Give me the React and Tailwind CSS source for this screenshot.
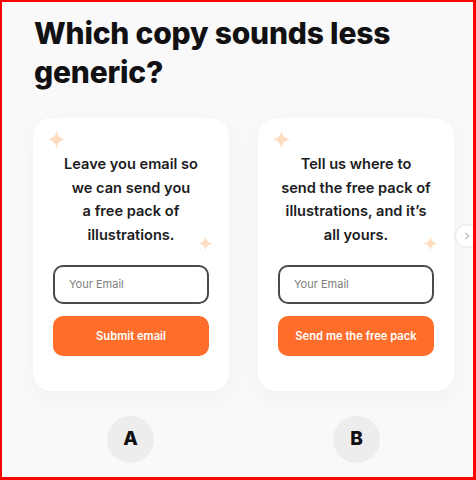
import React from 'react';

const Sparkle = ({ size = 18, className = '' }) => (
  <svg width={size} height={size} viewBox="0 0 24 24" className={className}>
    <path
      d="M12 0 C12.8 7.5 16.5 11.2 24 12 C16.5 12.8 12.8 16.5 12 24 C11.2 16.5 7.5 12.8 0 12 C7.5 11.2 11.2 7.5 12 0 Z"
      fill="#fddcc0"
    />
  </svg>
);

const CopyCard = ({ lines, button }) => (
  <div className="relative w-[196px] h-[273px] bg-white rounded-[18px] shadow-[0_6px_24px_rgba(0,0,0,0.04)] px-5 pt-[35px] flex flex-col">
    <Sparkle size={19} className="absolute left-[14px] top-[12px]" />
    <Sparkle size={15} className="absolute right-[16px] top-[118px]" />
    <p className="text-center text-[14.6px] leading-[23.5px] font-semibold text-[#1c1c1e]">
      {lines.map((l, i) => (
        <React.Fragment key={i}>
          {l}
          {i < lines.length - 1 && <br />}
        </React.Fragment>
      ))}
    </p>
    <div className="mt-[18px] h-[39px] rounded-[10px] border-2 border-[#4a4a4d] flex items-center px-[14px]">
      <span className="text-[11px] text-[#808080]">Your Email</span>
    </div>
    <button className="mt-[12px] h-[40px] rounded-[10px] bg-[#ff6d2b] text-white text-[11.2px] font-semibold">
      {button}
    </button>
  </div>
);

const App = () => {
  return (
    <div
      className="relative w-[476px] h-[480px] overflow-hidden bg-[#f9f9f9] border-l-2 border-t-2 border-r-[3px] border-b-[3px] border-[#ff0000]"
      style={{ fontFamily: 'Inter, "Noto Sans", sans-serif' }}
    >
      <h1 className="pl-[32px] pt-[12px] text-[30px] leading-[39px] font-extrabold tracking-[-0.2px] text-[#111114]">
        Which copy sounds less
        <br />
        generic?
      </h1>

      <div className="flex gap-[29px] pl-[31px] mt-[26px]">
        <CopyCard
          lines={['Leave you email so', 'we can send you', 'a free pack of', 'illustrations.']}
          button="Submit email"
        />
        <CopyCard
          lines={['Tell us where to', 'send the free pack of', 'illustrations, and it’s', 'all yours.']}
          button="Send me the free pack"
        />
      </div>

      <div className="flex gap-[179px] pl-[105px] mt-[25px]">
        <div className="w-[47px] h-[47px] rounded-full bg-[#ededed] flex items-center justify-center text-[19px] font-extrabold text-[#111114]">
          A
        </div>
        <div className="w-[47px] h-[47px] rounded-full bg-[#ededed] flex items-center justify-center text-[19px] font-extrabold text-[#111114]">
          B
        </div>
      </div>

      <div className="absolute left-[453px] top-[222px] w-[24px] h-[24px] rounded-full bg-white border border-[#e6e6e6] flex items-center justify-center">
        <svg width="10" height="10" viewBox="0 0 24 24" fill="none" stroke="#b5b5b5" strokeWidth="3" strokeLinecap="round" strokeLinejoin="round">
          <path d="M9 5l7 7-7 7" />
        </svg>
      </div>
    </div>
  );
};

export default App;
